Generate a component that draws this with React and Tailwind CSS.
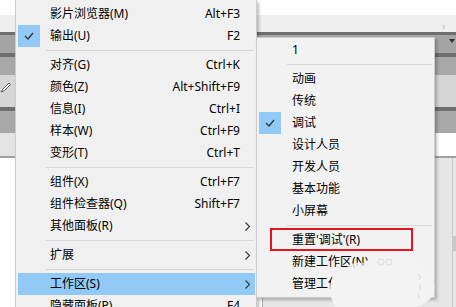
import React from 'react';

const FONT = { fontFamily: '"Noto Sans", "Noto Sans CJK SC", sans-serif' };

const mainItems = [
  { label: '影片浏览器(M)', key: 'Alt+F3' },
  { label: '输出(U)', key: 'F2', checked: true },
  { sep: true },
  { label: '对齐(G)', key: 'Ctrl+K' },
  { label: '颜色(Z)', key: 'Alt+Shift+F9' },
  { label: '信息(I)', key: 'Ctrl+I' },
  { label: '样本(W)', key: 'Ctrl+F9' },
  { label: '变形(T)', key: 'Ctrl+T' },
  { sep: true },
  { label: '组件(X)', key: 'Ctrl+F7' },
  { label: '组件检查器(Q)', key: 'Shift+F7' },
  { label: '其他面板(R)', sub: true },
  { sep: true },
  { label: '扩展', sub: true },
  { sep: true },
  { label: '工作区(S)', sub: true, active: true },
  { label: '隐藏面板(P)', key: 'F4' },
];

const subItems = [
  { label: '1' },
  { sep: true },
  { label: '动画' },
  { label: '传统' },
  { label: '调试', checked: true },
  { label: '设计人员' },
  { label: '开发人员' },
  { label: '基本功能' },
  { label: '小屏幕' },
  { sep: true },
  { label: "重置'调试'(R)" },
  { label: '新建工作区(N)...' },
  { label: '管理工作区(M)...' },
];

const Check = () => (
  <svg width="10" height="8" viewBox="0 0 10 8" fill="none">
    <path d="M1 4l3 3 5-6" stroke="#333" strokeWidth="1.3" />
  </svg>
);

const Chevron = () => (
  <svg width="5" height="9" viewBox="0 0 5 9" fill="none">
    <path d="M0.5 0.5l4 4-4 4" stroke="#333" strokeWidth="1.1" />
  </svg>
);

const MenuRow = ({ item, textPad, sepLeft }) => {
  if (item.sep) {
    return (
      <div className="h-[7px] flex items-center">
        <div className="h-px bg-[#d7d7d7] mr-[2px] flex-1" style={{ marginLeft: sepLeft }} />
      </div>
    );
  }
  return (
    <div
      className={`relative h-[22px] ml-[2px] mr-[1px] flex items-center text-[12px] text-black ${
        item.active ? 'bg-[#91c9f7]' : ''
      }`}
    >
      <div
        className={`w-[22px] h-[22px] flex items-center justify-center shrink-0 ${
          item.checked ? 'bg-[#91c9f7]' : ''
        }`}
      >
        {item.checked && <Check />}
      </div>
      <span className="whitespace-nowrap" style={{ paddingLeft: textPad }}>
        {item.label}
      </span>
      {item.key && <span className="ml-auto pr-[15px] whitespace-nowrap">{item.key}</span>}
      {item.sub && (
        <span className="absolute right-[5px] top-[7px] flex">
          <Chevron />
        </span>
      )}
    </div>
  );
};

const Background = () => (
  <div className="w-[456px] h-[307px] flex flex-col bg-white">
    <div className="h-[15px] bg-white" />
    <div className="h-[17px] bg-[#efefef] relative">
      <span className="absolute left-[442px] top-[3px] text-[#c0c0c0] text-[11px]">›</span>
    </div>
    <div className="h-[3px] bg-[#6e6e6e]" />
    <div className="h-[18px] bg-[#a4a4a4] relative">
      <span className="absolute left-[449px] top-[4px] w-0 h-0 border-l-[3px] border-r-[3px] border-t-[4px] border-l-transparent border-r-transparent border-t-[#333]" />
    </div>
    <div className="h-[4px] bg-[#6e6e6e]" />
    <div className="h-[18px] bg-[#a8a8a8]" />
    <div className="h-[32px] bg-[#d6d6d6] relative">
      <svg className="absolute left-0 top-[6px]" width="12" height="12" viewBox="0 0 12 12">
        <path d="M1 11l2-3 6-6 1.5 1.5-6 6z" fill="#fff" stroke="#333" strokeWidth="0.8" />
      </svg>
    </div>
    <div className="h-[4px] bg-[#6e6e6e]" />
    <div className="h-[22px] bg-[#a8a8a8]" />
    <div className="h-[23px] bg-[#e4e4e4] flex">
      <div className="w-[436px]" />
      <div className="flex-1 bg-white" />
    </div>
    <div className="h-[2px] bg-[#a0a0a0]" />
    <div className="flex-1 flex">
      <div className="w-[262px] bg-white" />
      <div className="flex-1 bg-[#e6e6e6] border-l border-[#a8a8a8] flex justify-end">
        <div className="w-[4px] border-l border-[#c8c8c8] flex flex-col">
          <div className="h-[78px]" />
          <div className="h-[15px] bg-[#c8c8c8]" />
        </div>
      </div>
    </div>
  </div>
);

export default function App() {
  return (
    <div className="relative w-[456px] h-[307px] overflow-hidden" style={FONT}>
      <Background />

      <div className="absolute left-[15px] top-0 w-[242px] h-[330px] bg-[#f0f0f0] border-l border-r border-[#cccccc] shadow-[2px_2px_3px_rgba(0,0,0,0.25)] pt-[3px]">
        {mainItems.map((item, i) => (
          <MenuRow key={i} item={item} textPad={10} sepLeft={30} />
        ))}
      </div>

      <div className="absolute left-[256px] top-[37px] w-[179px] h-[261px] bg-[#f2f2f2] border border-[#cccccc] shadow-[2px_2px_3px_rgba(0,0,0,0.25)] pt-[1px]">
        {subItems.map((item, i) => (
          <MenuRow key={i} item={item} textPad={11} sepLeft={30} />
        ))}
      </div>

      <div className="absolute left-[270px] top-[228px] w-[143px] h-[23px] border-2 border-[#e8141c]" />

      <svg className="absolute left-[325px] top-[250px]" width="115" height="57" viewBox="0 0 115 57">
        <path
          d="M10 57 C6 50 4 40 6 32 C8 24 22 20 38 16 C42 8 52 4 66 5 C82 4 96 10 102 20 C110 28 112 40 106 48 C100 54 94 56 90 57 Z"
          fill="#f3f3f3"
        />
        <path d="M38 16 C30 14 24 18 22 22" fill="none" stroke="#f3f3f3" strokeWidth="6" opacity="0.8" />
        <circle cx="56" cy="12" r="3" fill="none" stroke="#dedede" />
        <circle cx="64" cy="12" r="3" fill="none" stroke="#dedede" />
        <path d="M93 24 q4 2 1 6 M95 34 v6 M93 44 q3 2 0 4" stroke="#d8d8d8" fill="none" />
      </svg>
    </div>
  );
}
